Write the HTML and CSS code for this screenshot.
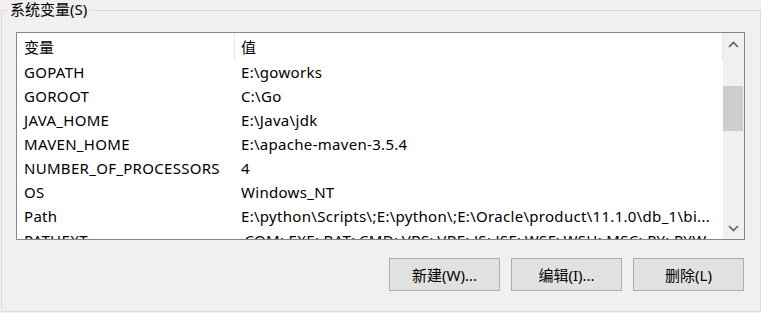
FILE: index.html
```html
<!DOCTYPE html>
<html lang="zh-CN">
<head>
<meta charset="utf-8">
<title>系统变量</title>
<link rel="stylesheet" href="styles.css">
</head>
<body>
<div class="group">
  <div class="legend">系统变量(S)</div>
  <div class="listbox">
    <div class="list">
      <div class="row header">
        <div class="c1">变量</div>
        <div class="c2">值</div>
      </div>
      <div class="row"><div class="c1">GOPATH</div><div class="c2">E:\goworks</div></div>
      <div class="row"><div class="c1">GOROOT</div><div class="c2">C:\Go</div></div>
      <div class="row"><div class="c1">JAVA_HOME</div><div class="c2">E:\Java\jdk</div></div>
      <div class="row"><div class="c1">MAVEN_HOME</div><div class="c2">E:\apache-maven-3.5.4</div></div>
      <div class="row"><div class="c1">NUMBER_OF_PROCESSORS</div><div class="c2">4</div></div>
      <div class="row"><div class="c1">OS</div><div class="c2">Windows_NT</div></div>
      <div class="row"><div class="c1">Path</div><div class="c2">E:\python\Scripts\;E:\python\;E:\Oracle\product\11.1.0\db_1\bi...</div></div>
      <div class="row"><div class="c1">PATHEXT</div><div class="c2">.COM;.EXE;.BAT;.CMD;.VBS;.VBE;.JS;.JSE;.WSF;.WSH;.MSC;.PY;.PYW</div></div>
    </div>
    <div class="scrollbar">
      <div class="arrow">
        <svg width="11" height="7" viewBox="0 0 11 7"><path d="M1 6 L5.5 1.5 L10 6" fill="none" stroke="#606060" stroke-width="1.6"/></svg>
      </div>
      <div class="track">
        <div class="thumb"></div>
      </div>
      <div class="arrow">
        <svg width="11" height="7" viewBox="0 0 11 7"><path d="M1 1 L5.5 5.5 L10 1" fill="none" stroke="#606060" stroke-width="1.6"/></svg>
      </div>
    </div>
  </div>
  <div class="buttons">
    <button class="btn">新建(W)...</button>
    <button class="btn">编辑(I)...</button>
    <button class="btn">删除(L)</button>
  </div>
</div>
</body>
</html>
```
FILE: styles.css
```css
html, body {
  margin: 0;
  padding: 0;
  background: #f0f0f0;
}
body {
  font-family: "Noto Sans", "Noto Sans CJK SC", sans-serif;
  font-size: 15px;
  color: #000;
  width: 761px;
  height: 313px;
  overflow: hidden;
}
.group {
  position: relative;
  box-sizing: border-box;
  margin: 10px 0 0 1px;
  width: 760px;
  height: 302px;
  border: 1px solid #dcdcdc;
  padding: 21px 15px 0 14px;
}
.legend {
  position: absolute;
  top: -12px;
  left: 6px;
  padding: 0 2px;
  background: #f0f0f0;
  line-height: 20px;
  font-size: 15px;
}
.listbox {
  box-sizing: border-box;
  height: 208px;
  border: 1px solid #828790;
  background: #fff;
  display: flex;
  overflow: hidden;
}
.list {
  flex: 1;
  min-width: 0;
  overflow: hidden;
  letter-spacing: 0.3px;
}
.row {
  display: flex;
  height: 24px;
  line-height: 24px;
  white-space: nowrap;
}
.row.header {
  height: 27px;
  line-height: 29px;
  letter-spacing: 0;
}
.c1 {
  box-sizing: border-box;
  width: 218px;
  padding-left: 7px;
  flex: none;
  overflow: hidden;
}
.c2 {
  box-sizing: border-box;
  flex: 1;
  min-width: 0;
  padding-left: 6px;
  overflow: hidden;
  text-overflow: ellipsis;
}
.header .c1 {
  border-right: 1px solid #e5e5e5;
}
.header .c2 {
  border-right: 1px solid #e5e5e5;
}
.scrollbar {
  width: 21px;
  flex: none;
  background: #f0f0f0;
  display: flex;
  flex-direction: column;
}
.arrow {
  height: 22px;
  display: flex;
  align-items: center;
  justify-content: center;
}
.arrow svg {
  display: block;
}
.track {
  flex: 1;
  padding-top: 31px;
}
.thumb {
  width: 20px;
  height: 45px;
  background: #cdcdcd;
}
.buttons {
  display: flex;
  justify-content: flex-end;
  gap: 11px;
  margin-top: 18px;
  padding-right: 1px;
}
.btn {
  box-sizing: border-box;
  width: 111px;
  height: 33px;
  background: #e1e1e1;
  border: 1px solid #adadad;
  font-family: inherit;
  font-size: 15px;
  color: #000;
  padding: 0;
  margin: 0;
}
```
